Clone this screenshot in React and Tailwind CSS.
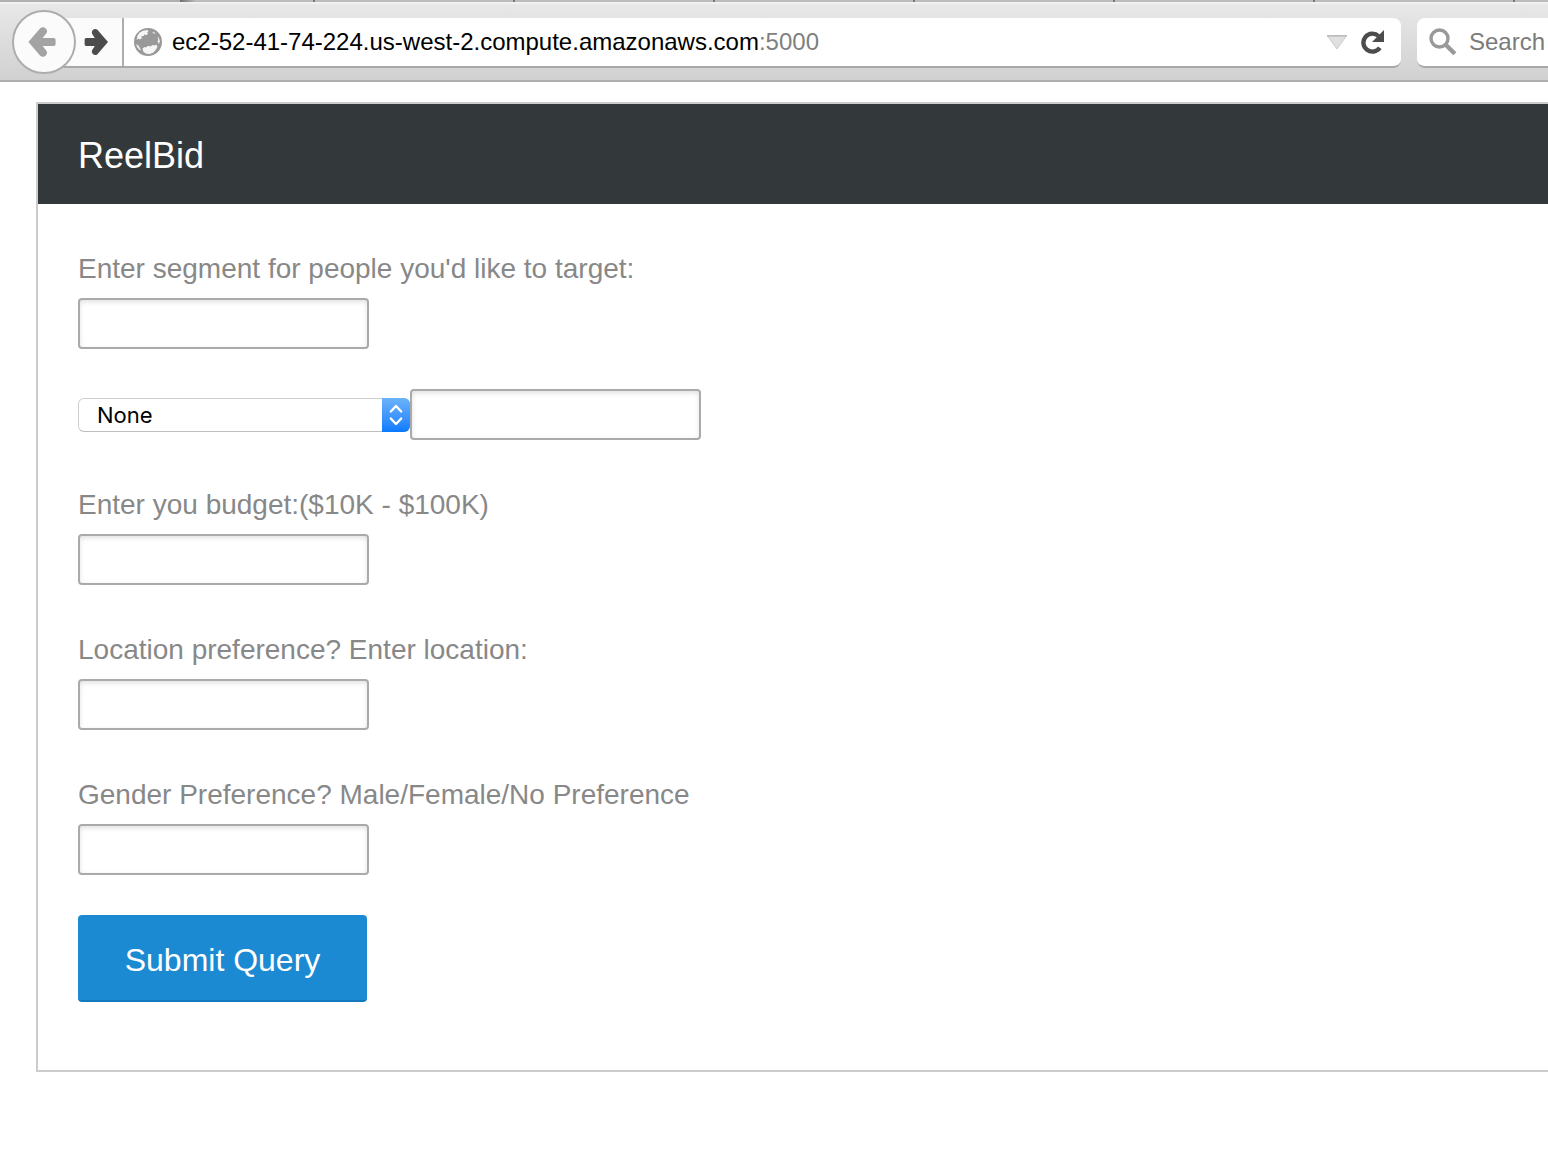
function BackIcon() {
  return (
    <svg viewBox="0 0 28 30" className="h-[30px] w-7" aria-hidden="true">
      <path d="M.4 15L12.200 1.300Q15-.9 17.800 1.600Q20 3.900 18.400 6.200L14.600 11H25.600Q27.600 11 27.600 13V17Q27.600 19 25.600 19H14.600L18.400 23.800Q20 26.100 17.800 28.400Q15 30.900 12.200 28.700Z" fill="#a3a3a3" />
    </svg>
  );
}

function ForwardIcon() {
  return (
    <svg viewBox="0 0 24 28" className="h-7 w-6" aria-hidden="true">
      <path d="M24 14L13.400 26.200Q11.200 28 8.800 26Q7 24 8.200 22L10.800 17.900H2.200Q.6 17.900 .6 16.300V11.700Q.6 10.100 2.200 10.100H10.800L8.200 6Q7 4 8.800 2Q11.200 0 13.400 1.800Z" fill="#4c4c4c" />
    </svg>
  );
}

function GlobeIcon() {
  return (
    <svg viewBox="0 0 28 28" className="size-7 shrink-0" aria-hidden="true">
      <circle cx="14" cy="14" r="13" fill="#999" stroke="#999" strokeWidth="2" />
      <path d="M5.500 4.800L9 2.800L13.500 2L14.500 3.200L13 4.500L14.200 5.800L12 7.200L10.800 6.200L9.500 8L7.200 8.200L8 10L5.800 11.500L4.500 10.500L2.600 12L3.500 7.800Z" fill="#f6f6f6" />
      <path d="M8.500 20.500L10.500 19L12 19.500L14 17.800L16.500 18.500L18.500 17L20.500 17.500L22 16.500L23.500 18.500L22 21.500L19.500 24.500L15.500 26L12.500 25.800L9.500 24Z" fill="#f6f6f6" />
      <path d="M2.300 16L4.500 17.500L6 20L7 22.500L5 21.500L3 19ZM23.500 8.500L25 10L26 13.500L24.800 16L23.600 13.500L24.200 11Z" fill="#eee" />
      <path d="M18 4L20 3.800L21.500 5.200L20 6Z" fill="#d8d8d8" />
    </svg>
  );
}

function ReloadIcon() {
  return (
    <svg viewBox="0 0 24 26" className="h-[26px] w-6" aria-hidden="true">
      <path d="M18.800 18.800A9 9 0 1 1 17.500 7" fill="none" stroke="#4c4c4c" strokeWidth="4.400" />
      <path d="M23 1V13H11Z" fill="#4c4c4c" />
    </svg>
  );
}

function SearchIcon() {
  return (
    <svg viewBox="0 0 28 28" className="size-7 shrink-0" aria-hidden="true">
      <circle cx="10.500" cy="10.500" r="8.500" fill="none" stroke="#999" strokeWidth="3.400" />
      <path d="M16.500 16.500L25.800 25.800" stroke="#999" strokeWidth="4.400" />
    </svg>
  );
}

function BrowserBar() {
  return (
    <header>
      <div className="flex h-[2px] bg-[#bcbcbc]">
        <div className="w-[180px] bg-[#b0b0b0]" />
        <div className="w-[133px] bg-linear-to-r from-[#707070] to-[#bcbcbc] to-12%" />
        <div className="flex-1 bg-[repeating-linear-gradient(90deg,#777_0_2px,#bcbcbc_2px_200px)]" />
      </div>
      <div className="flex h-20 items-start gap-4 border-t-2 border-b-2 border-t-[#f1f1f1] border-b-[#aeaeae] bg-linear-to-b from-[#e8e8e8] to-[#d1d1d1] pl-3">
        <div className="flex min-w-0 flex-1 items-start pt-1.5">
          <button type="button" aria-label="Back" className="z-10 flex size-16 shrink-0 items-center justify-center rounded-full border-2 border-[#adadad] bg-[#fbfbfb] pr-1">
            <BackIcon />
          </button>
          <div className="mt-2 -ml-4 flex h-[50px] min-w-0 flex-1 items-center rounded-r-lg border-b-2 border-[#a8a8a8] bg-white">
            <button type="button" aria-label="Forward" className="flex h-full w-16 shrink-0 items-center justify-end border-r-2 border-[#adadad] bg-[#fbfbfb] pr-3.5">
              <ForwardIcon />
            </button>
            <div className="flex min-w-0 flex-1 items-center gap-2.5 pl-2.5">
              <GlobeIcon />
              <div className="truncate text-[24px] text-black">
                ec2-52-41-74-224.us-west-2.compute.amazonaws.com<span className="text-[#7f7f7f]">:5000</span>
              </div>
            </div>
            <button type="button" aria-label="Show history" className="px-3.5">
              <svg viewBox="0 0 20 15" className="h-[15px] w-5" aria-hidden="true">
                <path d="M.5 .8H19.500L10 14Z" fill="#e0e0e0" />
                <path d="M.5 .8L10 14L19.500 .8" fill="none" stroke="#cacaca" />
                <path d="M0 .8H20" stroke="#b4b4b4" strokeWidth="1.400" />
              </svg>
            </button>
            <button type="button" aria-label="Reload" className="pr-4">
              <ReloadIcon />
            </button>
          </div>
        </div>
        <label className="mt-3.5 flex h-[50px] w-[131px] shrink-0 items-center gap-3 rounded-l-lg border-b-2 border-[#a8a8a8] bg-white pl-3">
          <SearchIcon />
          <input type="text" aria-label="Search" placeholder="Search" className="w-full min-w-0 text-[24px] outline-none placeholder:text-[#7b7b7b]" />
        </label>
      </div>
    </header>
  );
}

const inputClass =
  "block h-[51px] w-[291px] rounded-[4px] border-2 border-[#aaa] bg-white px-3 text-[26px] text-[#444] shadow-[inset_0_2px_5px_rgba(0,0,0,0.12)] outline-none";

function Field({ id, label }) {
  return (
    <div>
      <label htmlFor={id} className="mb-1.5 block pt-0.5 text-[28px] leading-[46px] text-[#888]">
        {label}
      </label>
      <input id={id} type="text" className={inputClass} />
    </div>
  );
}

export default function App() {
  return (
    <div className="min-h-screen overflow-hidden bg-white font-['Liberation_Sans',Arial,sans-serif]">
      <BrowserBar />
      <main className="mt-5 ml-9 border-2 border-r-0 border-[#ccc]">
        <div className="flex h-[100px] items-center bg-[#33383b] px-10 pt-1">
          <h1 className="text-[36px] text-white">ReelBid</h1>
        </div>
        <form className="flex flex-col items-start gap-10 px-10 pt-10 pb-[68px]" onSubmit={(e) => e.preventDefault()}>
          <Field id="segment" label="Enter segment for people you'd like to target:" />
          <div className="flex items-center">
            <div className="relative">
              <select aria-label="Segment type" className="block h-[34px] w-[332px] appearance-none rounded-md border border-[#cfcfcf] border-b-[#bdbdbd] bg-white pl-[18px] font-['Inter',sans-serif] text-[22px] leading-8 text-black outline-none">
                <option>None</option>
              </select>
              <span className="pointer-events-none absolute top-0 right-0 flex h-full w-7 items-center justify-center rounded-r-md bg-linear-to-b from-[#6bb3fa] to-[#067aff]">
                <svg viewBox="0 0 14 22" className="h-[22px] w-3.5" fill="none" stroke="#fff" strokeWidth="2.400" strokeLinecap="round" strokeLinejoin="round" aria-hidden="true">
                  <path d="M1.800 7.500L7 2L12.200 7.500M1.800 14.500L7 20L12.200 14.500" />
                </svg>
              </span>
            </div>
            <input type="text" aria-label="Segment value" className={inputClass} />
          </div>
          <Field id="budget" label="Enter you budget:($10K - $100K)" />
          <Field id="location" label="Location preference? Enter location:" />
          <Field id="gender" label="Gender Preference? Male/Female/No Preference" />
          <button type="submit" className="h-[87px] w-[289px] rounded-[4px] border-b-2 border-[#1579bd] bg-[#1b8ad3] pt-1 text-[32px] text-white">
            Submit Query
          </button>
        </form>
      </main>
    </div>
  );
}
